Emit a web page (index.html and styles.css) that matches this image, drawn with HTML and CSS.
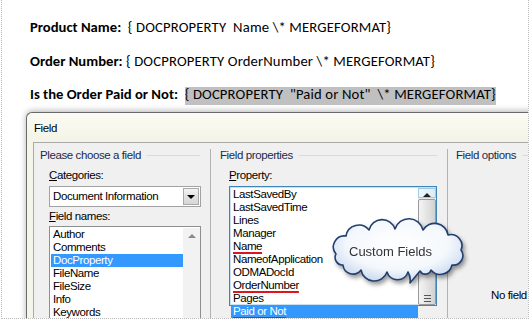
FILE: index.html
```html
<!DOCTYPE html>
<html lang="en">
<head>
  <meta charset="UTF-8">
  <meta name="viewport" content="width=device-width, initial-scale=1.0">
  <title>Field dialog - DOCPROPERTY</title>
  <link rel="stylesheet" href="styles.css">
</head>
<body>
  <div class="page">
    <!-- Document with field codes -->
    <div class="doc">
      <p class="doc-line"><b>Product Name:</b>  <span class="code">{ DOCPROPERTY  Name \* MERGEFORMAT}</span></p>
      <p class="doc-line"><b>Order Number:</b> <span class="code">{ DOCPROPERTY OrderNumber \* MERGEFORMAT}</span></p>
      <p class="doc-line"><b>Is the Order Paid or Not:</b>  <span class="code code-shaded">{ DOCPROPERTY  "Paid or Not"  \* MERGEFORMAT}</span></p>
    </div>

    <!-- Field dialog -->
    <div class="dialog">
      <div class="dialog-title">Field</div>
      <div class="dialog-body">
        <section class="group">
          <div class="group-head group-head-first"><span>Please choose a field</span></div>
          <div class="group-content indent-first">
            <div class="lbl"><u>C</u>ategories:</div>
            <div class="combo">
              <span class="combo-text">Document Information</span>
              <span class="combo-btn"></span>
            </div>
            <div class="lbl lbl-tight"><u>F</u>ield names:</div>
            <div class="listbox list-names">
              <ul class="list-items">
                <li>Author</li>
                <li>Comments</li>
                <li class="selected">DocProperty</li>
                <li>FileName</li>
                <li>FileSize</li>
                <li>Info</li>
                <li>Keywords</li>
              </ul>
              <div class="scrollbar">
                <span class="arrow-up"></span>
              </div>
            </div>
          </div>
        </section>

        <div class="divider"></div>

        <section class="group">
          <div class="group-head group-head-second"><span>Field properties</span></div>
          <div class="group-content indent-second">
            <div class="lbl"><u>P</u>roperty:</div>
            <div class="listbox list-props">
              <ul class="list-items">
                <li>LastSavedBy</li>
                <li>LastSavedTime</li>
                <li>Lines</li>
                <li>Manager</li>
                <li><span class="ink">Name</span></li>
                <li>NameofApplication</li>
                <li>ODMADocId</li>
                <li><span class="ink">OrderNumber</span></li>
                <li>Pages</li>
                <li class="selected"><span class="ink">Paid or Not</span></li>
              </ul>
              <div class="scrollbar scrollbar-active">
                <span class="arrow-btn"><span class="arrow-up"></span></span>
                <span class="thumb"><span class="grip"></span></span>
              </div>
            </div>
          </div>
        </section>

        <div class="divider"></div>

        <section class="group">
          <div class="group-head group-head-third"><span>Field options</span></div>
          <div class="no-field">No field</div>
        </section>
      </div>
    </div>

    <!-- Callout cloud -->
    <svg class="callout" width="136" height="64" viewBox="0 0 136 64">
      <defs>
        <radialGradient id="cloudFill" cx="50%" cy="40%" r="60%">
          <stop offset="0%" stop-color="#ffffff"/>
          <stop offset="65%" stop-color="#f4f8fc"/>
          <stop offset="100%" stop-color="#c9d9ee"/>
        </radialGradient>
      </defs>
      <path d="M5 29 A11 11 0 0 1 15 11 A13 13 0 0 1 38 5 A13.5 13.5 0 0 1 64 4 A14.5 14.5 0 0 1 92 5 A13.5 13.5 0 0 1 117 10 A11 11 0 0 1 130 25 A9.5 9.5 0 0 1 121 40 A12 12 0 0 1 100 45 A6 6 0 0 1 89 46 Q84 52 79 58 Q80 52 77 47 A11 11 0 0 1 56 47 A13.5 13.5 0 0 1 30 45 A10 10 0 0 1 12 40 A7.5 7.5 0 0 1 5 29 Z"
            fill="url(#cloudFill)" stroke="#22406f" stroke-width="1.6" stroke-linejoin="round"/>
      <text x="18" y="31" class="callout-text">Custom Fields</text>
    </svg>
  </div>
</body>
</html>
```

FILE: styles.css
```css
:root {
  --dialog-font: 'Liberation Sans', Arial, sans-serif;
  --doc-font: 'Carlito', 'Liberation Sans', sans-serif;
  --select-blue: #3399ff;
  --frame: #f5f5ea;
  --panel: #f0f0f0;
}

* {
  margin: 0;
  padding: 0;
  box-sizing: border-box;
}

body {
  background: #fff;
  width: 530px;
  height: 320px;
  overflow: hidden;
}

.page {
  position: relative;
  height: 319px;
  margin: 0 1px 0 1px;
  border: 1px dotted #b8b8b8;
  border-top: none;
  overflow: hidden;
}

/* Document */
.doc {
  padding: 11px 0 0 28px;
  font-family: var(--doc-font);
  font-size: 14.67px;
  color: #000;
}

.doc-line {
  line-height: 33.5px;
  white-space: pre;
}

.doc-line b {
  font-weight: 700;
}

.code {
  letter-spacing: 0.15px;
}

.code-shaded {
  padding-bottom: 2px;
  background: linear-gradient(transparent 2px, #c0c0c0 2px);
}

/* Dialog */
.dialog {
  width: 520px;
  margin: 0 0 0 24px;
  border: 1px solid #6a6a6a;
  border-right: none;
  border-radius: 6px 0 0 0;
  background: var(--frame);
  box-shadow: 0 -1px 6px rgba(0, 0, 0, 0.3);
  font-family: var(--dialog-font);
  font-size: 11.5px;
  letter-spacing: -0.4px;
  color: #000;
}

.dialog-title {
  height: 29px;
  line-height: 31px;
  padding-left: 7px;
  background: linear-gradient(#fbfbf4, #f3f3e6);
  border-radius: 6px 0 0 0;
}

.dialog-body {
  display: grid;
  grid-template-columns: 176px 1px 236px 1px 1fr;
  height: 200px;
  margin-left: 6px;
  border-top: 1px solid #a9a9a9;
  border-left: 1px solid #a9a9a9;
  background: var(--panel);
}

.divider {
  margin-top: 6px;
  background: #b2b2b2;
}

.group-head {
  display: flex;
  align-items: center;
  gap: 6px;
  padding-top: 5px;
  line-height: 15px;
  color: #1b2b4a;
}

.group-head::after {
  content: '';
  flex: 1;
  height: 1px;
  margin-top: 1px;
  background: #d4dbe3;
}

.group-head-first {
  padding-left: 6px;
  padding-right: 10px;
}

.group-head-second {
  padding-left: 9px;
  padding-right: 10px;
}

.group-head-third {
  padding-left: 8px;
}

.indent-first {
  margin-left: 15px;
}

.indent-second {
  margin-left: 18px;
}

.lbl {
  margin-top: 5px;
  line-height: 15px;
}

.lbl-tight {
  margin-top: 2px;
}

.lbl u {
  text-underline-offset: 1px;
}

/* Combo box */
.combo {
  display: flex;
  align-items: center;
  width: 152px;
  height: 21px;
  margin-top: 3px;
  padding: 1px;
  border: 1px solid #a2a2a2;
  background: #fff;
}

.combo-text {
  padding-left: 2px;
  line-height: 19px;
}

.combo-btn {
  position: relative;
  width: 16px;
  height: 17px;
  margin-left: auto;
  border: 1px solid #a9a9a9;
  background: linear-gradient(#f4f4f4, #e2e2e2 50%, #d6d6d6);
}

.combo-btn::after {
  content: '';
  position: absolute;
  left: 3px;
  top: 6px;
  border-left: 4px solid transparent;
  border-right: 4px solid transparent;
  border-top: 4px solid #000;
}

/* List boxes */
.listbox {
  display: flex;
  height: 120px;
  margin-top: 2px;
  padding: 1px 0 0 1px;
  border: 1px solid #8e8f8f;
  background: #fff;
}

.list-names {
  width: 152px;
}

.list-props {
  width: 208px;
  margin-top: 3px;
  border-color: #3f86b8;
  box-shadow: inset 0 0 0 1px #c8e0f0;
}

.list-items {
  list-style: none;
  flex: 1;
}

.list-items li {
  height: 13px;
  line-height: 13px;
  padding-left: 2px;
  white-space: nowrap;
}

.list-items li.selected {
  background: var(--select-blue);
  color: #fff;
}

.ink {
  text-decoration: underline;
  text-decoration-color: #e0141e;
  text-decoration-thickness: 2px;
  text-underline-offset: 2px;
}

.scrollbar {
  display: flex;
  flex-direction: column;
  align-items: center;
  width: 17px;
  background: #f2f2f2;
}

.scrollbar-active {
  width: 18px;
  background: #e9e9e9;
}

.arrow-up {
  width: 0;
  height: 0;
  margin-top: 6px;
  border-left: 4px solid transparent;
  border-right: 4px solid transparent;
  border-bottom: 4px solid #8a8a8a;
}

.arrow-btn {
  display: flex;
  justify-content: center;
  width: 100%;
  height: 16px;
  border: 1px solid #a4c9e2;
  background: linear-gradient(90deg, #eef6fc, #d9ecf8);
}

.arrow-btn .arrow-up {
  margin-top: 4px;
  border-bottom-color: #222;
}

.thumb {
  display: flex;
  justify-content: center;
  width: 100%;
  height: 200px;
  margin-top: 1px;
  border: 1px solid #9a9a9a;
  border-radius: 2px;
  background: linear-gradient(90deg, #f4f4f4, #e6e6e6 45%, #d2d2d2);
}

.grip {
  width: 7px;
  height: 8px;
  margin-top: 95px;
  background: repeating-linear-gradient(#555 0 1px, transparent 1px 3px);
}

.no-field {
  margin: 125px 0 0 43px;
  line-height: 15px;
}

/* Callout */
.callout {
  position: absolute;
  left: 329px;
  top: 225px;
  overflow: visible;
  filter: drop-shadow(2px 3px 2px rgba(0, 0, 0, 0.4));
}

.callout-text {
  font-family: 'Liberation Sans', Arial, sans-serif;
  font-size: 13px;
  fill: #333;
}
```
